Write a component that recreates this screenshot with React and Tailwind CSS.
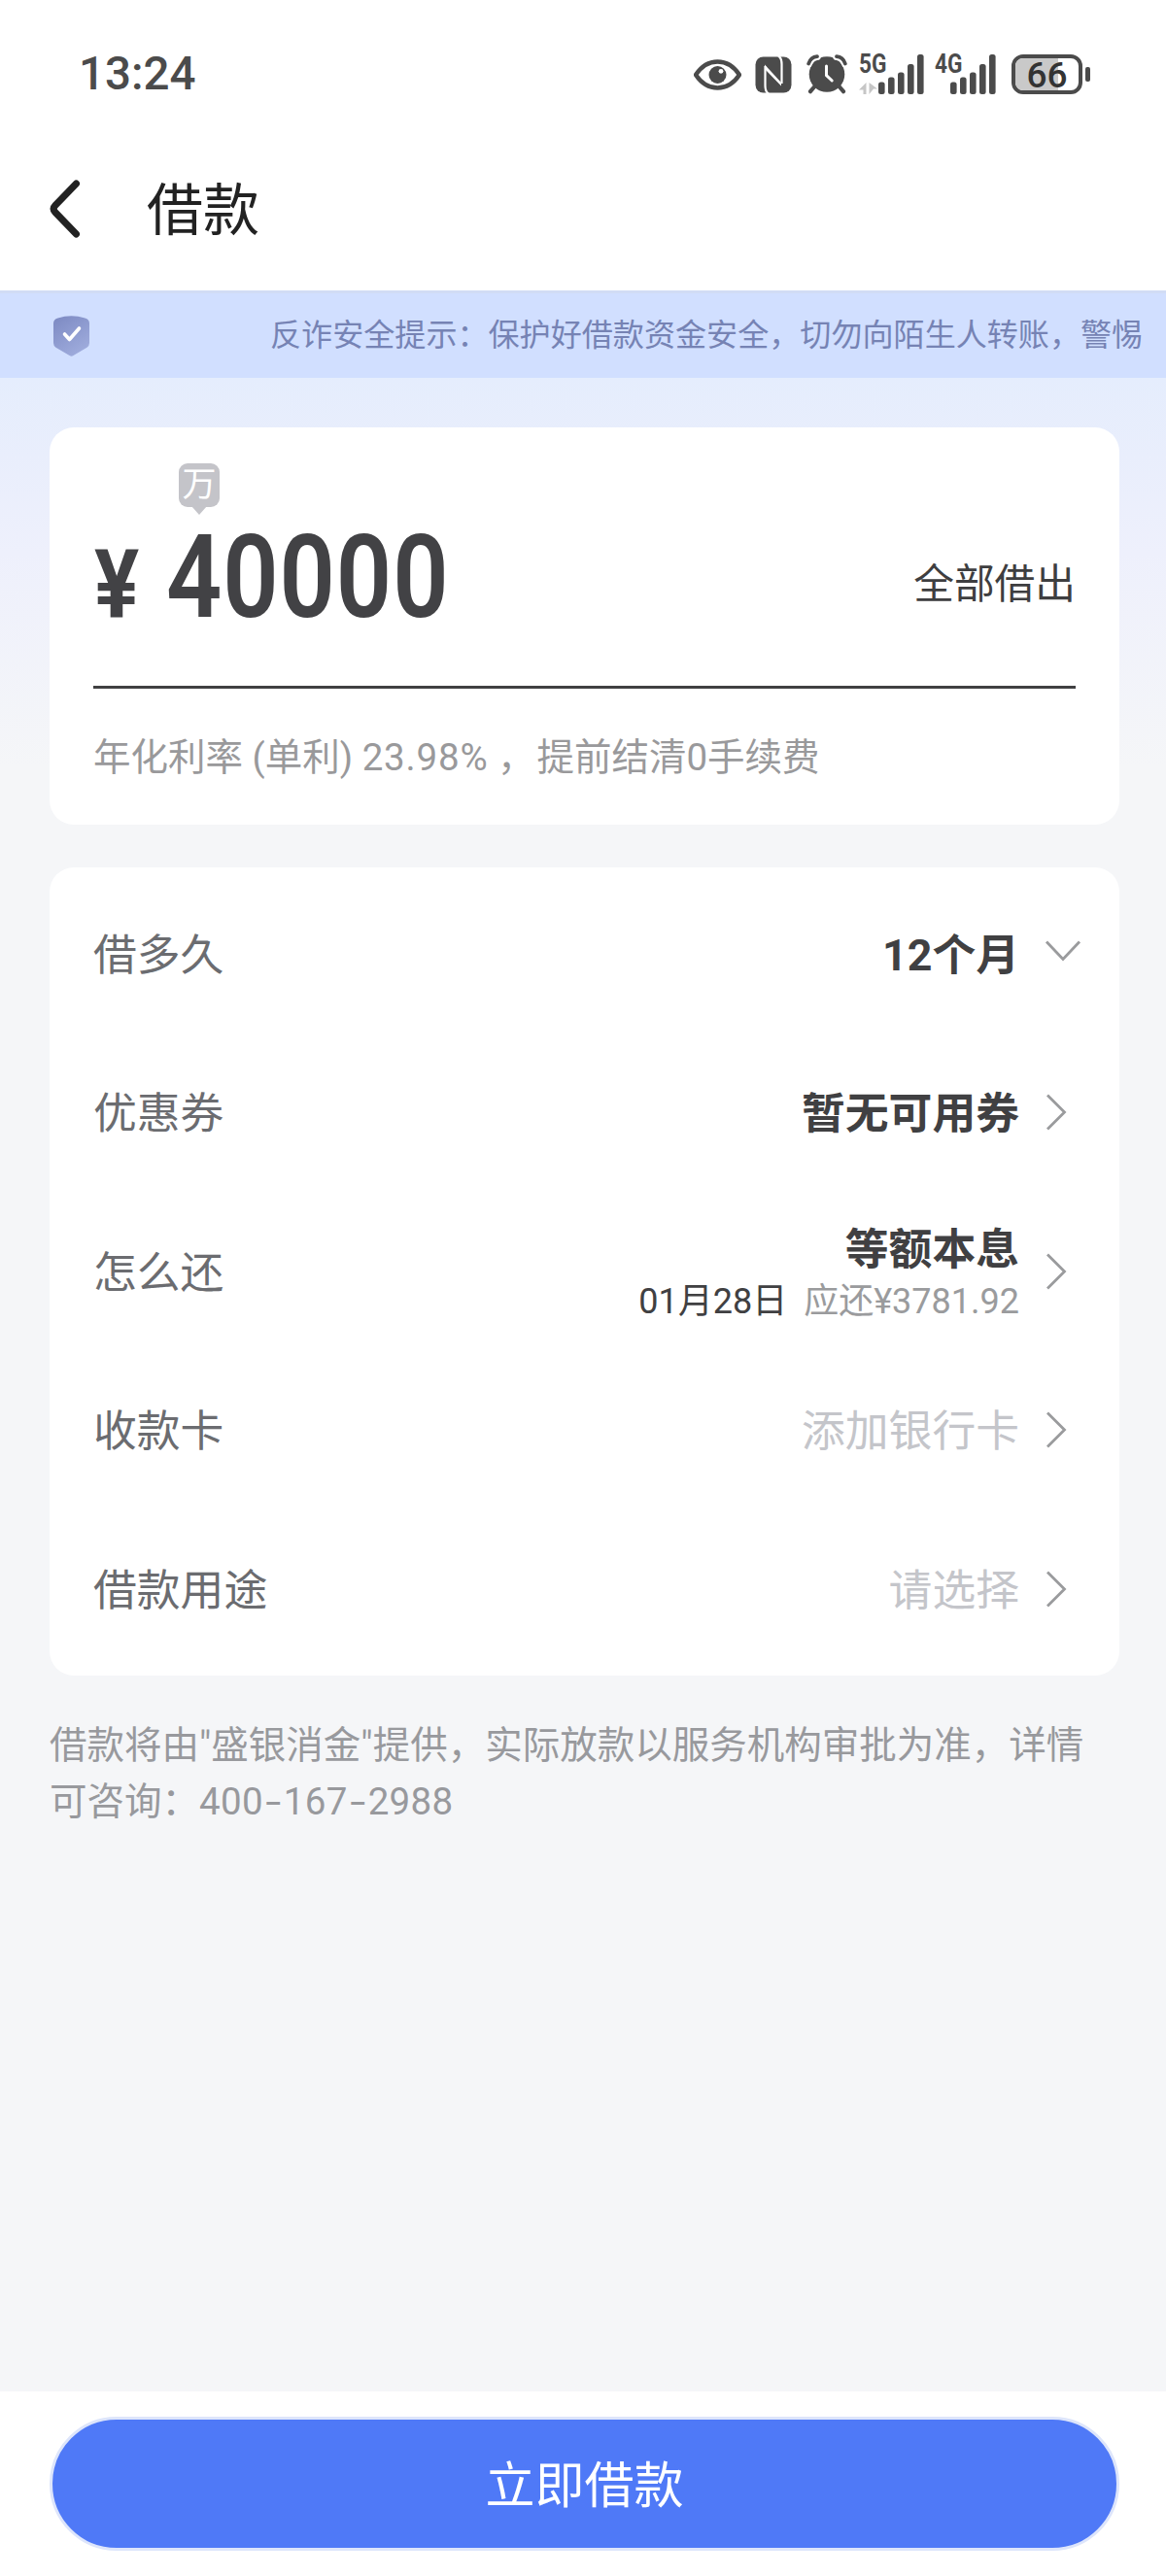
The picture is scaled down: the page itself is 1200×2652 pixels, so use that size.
const INK = '#4b4b4b';

function Eye() {
  return (
    <svg className="block shrink-0" width="49" height="32" viewBox="0 0 49 32">
      <path d="M2 16C8 7 16 2.5 24.5 2.5S41 7 47 16C41 25 33 29.5 24.5 29.5S8 25 2 16Z" fill="none" stroke={INK} strokeWidth="4.4" strokeLinejoin="round" />
      <circle cx="24.5" cy="16" r="9" fill={INK} />
      <circle cx="28" cy="12.3" r="2.4" fill="#fff" />
    </svg>
  );
}

function Nfc() {
  return (
    <svg className="block shrink-0" width="38" height="38" viewBox="0 0 38 38">
      <rect x="0.5" y="0.5" width="37" height="37" rx="8" fill={INK} />
      <path d="M10.5 10V30C10.5 34 11.5 37 14 38.5" fill="none" stroke="#fff" strokeWidth="2.2" />
      <path d="M27.5 28V8C27.5 4 26.5 1 24 -0.5" fill="none" stroke="#fff" strokeWidth="2.2" />
      <path d="M10 8.5L27 27V30.5L10 13Z" fill="#fff" />
    </svg>
  );
}

function Alarm() {
  return (
    <svg className="block shrink-0" width="42" height="41" viewBox="0 0 42 41">
      <circle cx="21" cy="20.5" r="18.3" fill={INK} />
      <path d="M2.2 9.5C3.5 5.5 6.5 2.6 11 2.2M39.8 9.5C38.5 5.5 35.5 2.6 31 2.2" fill="none" stroke="#fff" strokeWidth="7.5" strokeLinecap="round" />
      <path d="M2.2 9.5C3.5 5.5 6.5 2.6 11 2.2M39.8 9.5C38.5 5.5 35.5 2.6 31 2.2" fill="none" stroke={INK} strokeWidth="3.8" strokeLinecap="round" />
      <path d="M8 33.5L4 38.2M34 33.5L38 38.2" stroke={INK} strokeWidth="4.2" strokeLinecap="round" />
      <path d="M20.5 12V21.5L26.2 27" fill="none" stroke="#fff" strokeWidth="3" strokeLinecap="round" />
    </svg>
  );
}

function Signal({ label, data }) {
  return (
    <div className="relative h-[41px] w-[68px] shrink-0">
      <svg className="block" width="68" height="41" viewBox="0 0 68 41">
        {[
          [20, 28.5],
          [30, 23.5],
          [40, 18.5],
          [50, 10],
          [60, 0],
        ].map(([x, y]) => (
          <rect key={x} x={x} y={y} width="6.6" height={41 - y} rx="2.5" fill={INK} />
        ))}
        {data && <path d="M7.5 29V41H4.5V36.5H0ZM10.5 41V29L19 35.5H15Z" fill="#c6c6c6" />}
      </svg>
      <span className={`absolute top-[-3px] origin-left scale-x-[0.84] text-[27px] font-bold leading-[27px] text-[#4b4b4b] ${data ? 'left-0' : 'left-[4px]'}`}>{label}</span>
    </div>
  );
}

function Battery() {
  return (
    <div className="flex shrink-0 items-center gap-[3px]">
      <div className="relative flex h-[41px] w-[73px] items-center justify-center overflow-hidden rounded-[12px] border-[4px] border-[#4b4b4b]">
        <div className="absolute inset-y-0 left-0 w-[44px] bg-[#c9c9c9]" />
        <span className="relative mt-[1px] text-[37px] font-medium leading-none text-[#333]">66</span>
      </div>
      <div className="h-[15px] w-[5px] rounded-[2px] bg-[#4b4b4b]" />
    </div>
  );
}

function Chevron({ down }) {
  return down ? (
    <svg className="ml-[26px] mr-[-3px] mt-[-6px] block shrink-0" width="38" height="22" viewBox="0 0 38 22">
      <path d="M2 1.5L19 19.5L36 1.5" fill="none" stroke="#9a9b9d" strokeWidth="2.8" />
    </svg>
  ) : (
    <svg className="ml-[26px] mr-[11px] block shrink-0" width="24" height="38" viewBox="0 0 24 38">
      <path d="M3 1.5L20.5 19L3 36.5" fill="none" stroke="#9a9b9d" strokeWidth="2.8" />
    </svg>
  );
}

function Row({ label, children, down }) {
  return (
    <div className="flex h-[163.5px] items-center pl-[45px] pr-[42px] text-[44.8px] leading-none">
      <span className="pt-[5px] text-[#6b6c70]">{label}</span>
      <div className="ml-auto pt-[5px] text-right">{children}</div>
      <Chevron down={down} />
    </div>
  );
}

export default function App() {
  return (
    <div className="flex h-[2652px] w-[1200px] flex-col overflow-hidden whitespace-nowrap bg-[#f5f6f8] font-[Roboto,'Noto_Sans_CJK_SC',sans-serif]">
      <header className="h-[299px] shrink-0 bg-white">
        <div className="flex h-[153px] items-center pl-[81px] pr-[78px]">
          <span className="text-[47.5px] font-medium leading-none text-[#4b4b4b]">13:24</span>
          <div className="ml-auto flex items-center">
            <Eye />
            <div className="w-[14px]" />
            <Nfc />
            <div className="w-[15px]" />
            <Alarm />
            <div className="w-[12px]" />
            <Signal label="5G" data />
            <div className="w-[6px]" />
            <Signal label="4G" />
            <div className="w-[15px]" />
            <Battery />
          </div>
        </div>
        <div className="flex h-[126px] items-center pl-[48px]">
          <svg className="block" width="38" height="62" viewBox="0 0 38 62">
            <path d="M30.5 4L8.8 26.5Q5.5 30 8.8 33.5L30.5 56" fill="none" stroke="#222" strokeWidth="7" strokeLinecap="round" />
          </svg>
          <h1 className="ml-[65px] pt-[2px] text-[58px] leading-none text-[#222]">借款</h1>
        </div>
      </header>

      <div className="flex h-[90px] shrink-0 items-center border-t-[3px] border-[#d1dcf5] bg-[#d1dfff] pl-[55px]">
        <svg className="block shrink-0" width="37" height="42" viewBox="0 0 37 42">
          <defs>
            <linearGradient id="shield" x1="0" y1="0" x2="0.6" y2="1">
              <stop offset="0" stopColor="#7c89c2" />
              <stop offset="1" stopColor="#9eabdc" />
            </linearGradient>
          </defs>
          <path d="M0 8Q0 3.5 4.5 2.5Q18.5-1.8 32.5 2.5Q37 3.5 37 8V28Q37 31 34.5 32.7L20.5 41Q18.5 42.5 16.5 41L2.5 32.7Q0 31 0 28Z" fill="url(#shield)" />
          <path d="M11.5 19L16.5 24.5L26.5 13" fill="none" stroke="#fff" strokeWidth="3.6" strokeLinecap="round" strokeLinejoin="round" />
        </svg>
        <span className="ml-[186px] text-[32.1px] leading-none text-[#7683b4]">反诈安全提示：保护好借款资金安全，切勿向陌生人转账，警惕</span>
      </div>

      <main className="h-[2073px] shrink-0 bg-[linear-gradient(180deg,#e5edfd_0px,#e9eefc_80px,#eef0fc_180px,#f5f6f8_400px)] pl-[51px] pr-[48px] pt-[51px]">
        <section className="h-[409px] rounded-[25px] bg-white px-[45px]">
          <div className="relative flex h-[266px] items-center">
            <span className="absolute left-[1px] top-[123px] origin-left scale-x-[0.88] text-[98px] font-bold leading-[80px] text-[#424245]">¥</span>
            <span className="absolute left-[75px] top-[105px] origin-left scale-x-[0.845] text-[119px] font-semibold leading-[100px] tracking-[1px] text-[#424245]">40000</span>
            <div className="absolute left-[88px] top-[37px] flex h-[45px] w-[42px] items-center justify-center rounded-[9px] bg-[#c4c4c9] text-[35px] leading-none text-white">
              万
              <svg className="absolute left-[13px] top-[44px]" width="16" height="9" viewBox="0 0 16 9">
                <path d="M0 0H16L8 9Z" fill="#c4c4c9" />
              </svg>
            </div>
            <span className="ml-auto mt-[58px] text-[41.7px] leading-none text-[#3e3e40]">全部借出</span>
          </div>
          <div className="h-[3px] bg-[#404042]" />
          <p className="mt-[51px] text-[38.5px] leading-[40px] text-[#99999b]">
            年化利率 (单利) <span className="tracking-[0.8px]">23.98%</span> ，<span className="ml-[2px]">提前结清0手续费</span>
          </p>
        </section>

        <section className="mt-[44px] h-[832px] rounded-[25px] bg-white py-[7px]">
          <Row label="借多久" down>
            <span className="font-bold text-[#404042]">12个月</span>
          </Row>
          <Row label="优惠券">
            <span className="font-bold text-[#404042]">暂无可用券</span>
          </Row>
          <Row label="怎么还">
            <div className="pt-[4px] font-bold leading-[53px] text-[#404042]">等额本息</div>
            <div className="text-[36px] leading-[54px] text-[#9a9b9d]">
              <span className="mr-[17px] text-[#404042]">01月28日</span>应还¥3781.92
            </div>
          </Row>
          <Row label="收款卡">
            <span className="text-[#c4c5ca]">添加银行卡</span>
          </Row>
          <Row label="借款用途">
            <span className="text-[#c4c5ca]">请选择</span>
          </Row>
        </section>

        <p className="mt-[43px] text-[38.5px] leading-[58px] text-[#98999d]">
          借款将由"盛银消金"提供，实际放款以服务机构审批为准，详情
          <br />
          可咨询：<span className="tracking-[0.3px]">400<span className="mx-[1px] inline-block w-[19px] origin-center scale-x-[1.5] text-center">-</span>167<span className="mx-[1px] inline-block w-[19px] origin-center scale-x-[1.5] text-center">-</span>2988</span>
        </p>
      </main>

      <footer className="h-[190px] shrink-0 bg-white px-[51px] pr-[48px] pt-[26px]">
        <button className="block h-[138px] w-full rounded-full border-[3px] border-[#dde5fb] bg-[#4f79f7] pt-[5px] text-[51px] leading-none text-white">立即借款</button>
      </footer>
    </div>
  );
}
